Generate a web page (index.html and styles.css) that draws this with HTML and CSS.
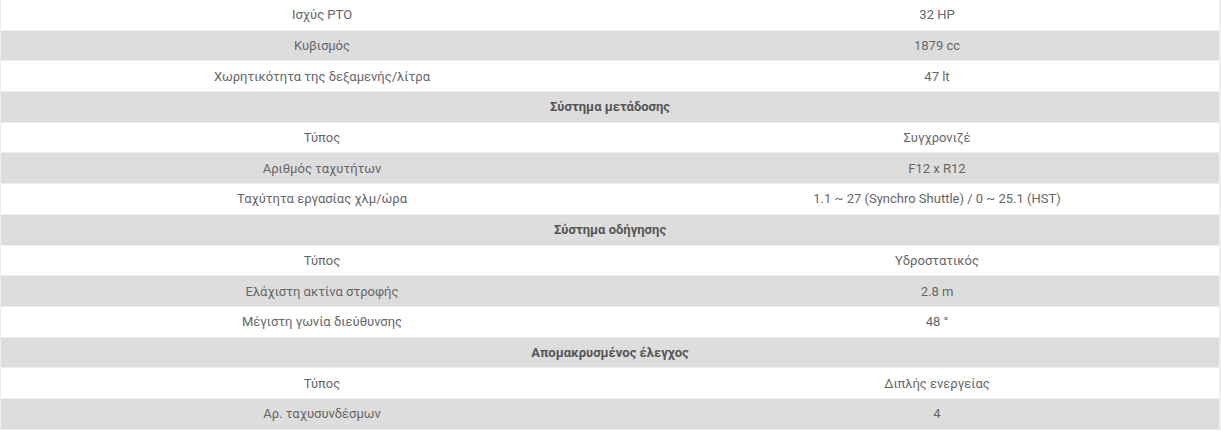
FILE: index.html
```html
<!DOCTYPE html>
<html lang="el">
<head>
<meta charset="utf-8">
<link rel="stylesheet" href="styles.css">
</head>
<body>
<table class="specs">
  <tbody>
    <tr class="odd"><td class="label">Ισχύς PTO</td><td class="value">32 HP</td></tr>
    <tr class="even"><td class="label">Κυβισμός</td><td class="value">1879 cc</td></tr>
    <tr class="odd"><td class="label">Χωρητικότητα της δεξαμενής/λίτρα</td><td class="value">47 lt</td></tr>
    <tr class="even"><td class="section" colspan="2">Σύστημα μετάδοσης</td></tr>
    <tr class="odd"><td class="label">Τύπος</td><td class="value">Συγχρονιζέ</td></tr>
    <tr class="even"><td class="label">Αριθμός ταχυτήτων</td><td class="value">F12 x R12</td></tr>
    <tr class="odd"><td class="label">Ταχύτητα εργασίας χλμ/ώρα</td><td class="value">1.1 ~ 27 (Synchro Shuttle) / 0 ~ 25.1 (HST)</td></tr>
    <tr class="even"><td class="section" colspan="2">Σύστημα οδήγησης</td></tr>
    <tr class="odd"><td class="label">Τύπος</td><td class="value">Υδροστατικός</td></tr>
    <tr class="even"><td class="label">Ελάχιστη ακτίνα στροφής</td><td class="value">2.8 m</td></tr>
    <tr class="odd"><td class="label">Μέγιστη γωνία διεύθυνσης</td><td class="value">48 °</td></tr>
    <tr class="even"><td class="section" colspan="2">Απομακρυσμένος έλεγχος</td></tr>
    <tr class="odd"><td class="label">Τύπος</td><td class="value">Διπλής ενεργείας</td></tr>
    <tr class="even"><td class="label">Αρ. ταχυσυνδέσμων</td><td class="value">4</td></tr>
  </tbody>
</table>
</body>
</html>
```
FILE: styles.css
```css
html, body {
  margin: 0;
  padding: 0;
  background: #ffffff;
}
.specs {
  width: 1221px;
  margin-top: -1px;
  border-collapse: separate;
  border-spacing: 0 1px;
  border-left: 1px solid #eeeeee;
  border-right: 2px solid #eeeeee;
  background: #eeeeee;
  table-layout: fixed;
  font-family: Roboto, "Liberation Sans", Arial, sans-serif;
  font-size: 13px;
  color: #666666;
}
.specs td {
  height: 29.7px;
  padding: 0;
  text-align: center;
  vertical-align: middle;
  line-height: 15px;
}
.odd td { background: #ffffff; }
.even td { background: #dddddd; }
.label {
  width: 642px;
}
.value {
  padding-left: 12px !important;
}
.section {
  font-weight: bold;
  color: #555555;
}
```
